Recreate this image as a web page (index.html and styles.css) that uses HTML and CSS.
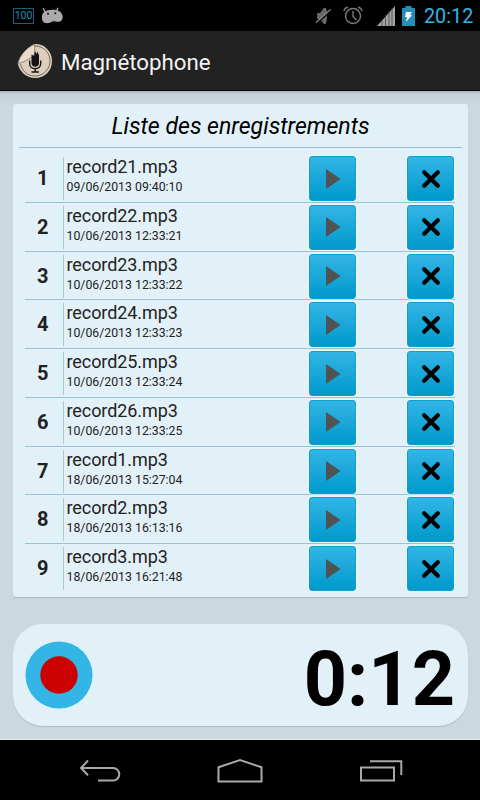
FILE: index.html
```
<!DOCTYPE html>
<html lang="fr">
<head>
<meta charset="utf-8">
<title>Magnétophone</title>
<link rel="stylesheet" href="styles.css">
</head>
<body>
<svg class="defs" aria-hidden="true">
  <symbol id="play" viewBox="0 0 20 22"><path d="M3 1 17.500 11 3 21Z" fill="#505254"/></symbol>
  <symbol id="cross" viewBox="0 0 20 20"><path d="M3.200 3.200 16.800 16.800M16.800 3.200 3.200 16.800" stroke="#000" stroke-width="4.200" stroke-linecap="round"/></symbol>
</svg>
<header class="status">
  <span class="level">100</span>
  <svg class="android" width="22" height="17" viewBox="0 0 22 17"><path d="M4 5 2.200 1M15.500 4 17 .8" stroke="#aaa" stroke-width="1.300"/><path d="M3 5C6 2.500 15 1.800 18 4c3.500 2 4.500 6 3 8.800-1.200 2.200-4.300 2.400-6.500 1.600-2-.6-3 .1-5 1-3 1.300-7 1.100-8-1.600C.5 11 .5 7.500 3 5Z" fill="#aaa"/><circle cx="7" cy="6.700" r="1" fill="#111"/><circle cx="14.300" cy="6.200" r="1" fill="#111"/></svg>
  <span class="grow"></span>
  <svg class="mute" width="17" height="18" viewBox="0 0 17 18"><path d="M2 6h3l4-5h1.500v16H9l-4-5H2Z" fill="#666"/><path d="M9 1.500c3-1 3 14 0 15" fill="none" stroke="#777" stroke-width="1.500"/><path d="m1.700 16.500 14.500-13" stroke="#000" stroke-width="1.500"/><path d="m1 15.500 14.500-13" stroke="#888" stroke-width="1.300"/></svg>
  <svg class="alarm" width="20" height="19" viewBox="0 0 20 19" fill="none" stroke="#7c7c7c" stroke-width="1.400"><circle cx="10" cy="10" r="7.500"/><path d="M10 5v5.500l3.500 3.500M1 5.200C1.200 3 2.700 1.600 5 1.200M15 1.200c2.300.4 3.800 1.800 4 4"/></svg>
  <svg class="signal" width="18" height="20" viewBox="0 0 18 20"><path d="M0 20 18 0v20Z" fill="#a3a3a3"/><path d="M5 13v7M8.500 9v11M12 5v15M15 2v18" stroke="#444" stroke-width=".8"/></svg>
  <svg class="battery" width="13" height="20" viewBox="0 0 13 20"><path d="M3.500 0h6v2H13v18H0V2h3.500Z" fill="#258fb8"/><path d="M4 6h6L8 9h2l-6 7 1-5H3Z" fill="#fff"/></svg>
  <span class="clock">20:12</span>
</header>
<div class="appbar">
  <svg class="logo" width="36" height="36" viewBox="0 0 36 36"><path d="M17.500 1C27 .5 35 8 35 18s-7.500 17-17 17C9 35 2.500 28.500.8 20.500Z" fill="#dccdbc"/><path d="M18 3C27 3 33 10 33 18s-6.500 15-15 15C10.500 33 5 28 3.500 21" fill="none" stroke="#5c5148" stroke-width=".8"/><path d="M17.500 1C18 6 17.800 10 16.500 13.500 11.500 16.500 6 19.500.8 20.500 2.500 13 9 5 17.500 1Z" fill="#eadccc" stroke="#6e6258" stroke-width=".7"/><path d="M14.500 11.500 17 13l1-5 1.500 3 1-2.500 1.500 4V20c0 5-7.500 5-7.500 0Z" fill="#151515"/><path d="M12.700 17.500v3c0 7 11 7 11 0v-3M18.200 25.500v3.500M14.500 29h7.500" fill="none" stroke="#151515" stroke-width="1.400"/></svg>
  <h1>Magnétophone</h1>
</div>
<main>
  <section class="panel">
    <h2>Liste des enregistrements</h2>
    <ol>
      <li><b>1</b><div class="info"><p>record21.mp3</p><time>09/06/2013 09:40:10</time></div><button aria-label="Lire"><svg class="play"><use href="#play"/></svg></button><button aria-label="Supprimer"><svg class="cross"><use href="#cross"/></svg></button></li>
      <li><b>2</b><div class="info"><p>record22.mp3</p><time>10/06/2013 12:33:21</time></div><button aria-label="Lire"><svg class="play"><use href="#play"/></svg></button><button aria-label="Supprimer"><svg class="cross"><use href="#cross"/></svg></button></li>
      <li><b>3</b><div class="info"><p>record23.mp3</p><time>10/06/2013 12:33:22</time></div><button aria-label="Lire"><svg class="play"><use href="#play"/></svg></button><button aria-label="Supprimer"><svg class="cross"><use href="#cross"/></svg></button></li>
      <li><b>4</b><div class="info"><p>record24.mp3</p><time>10/06/2013 12:33:23</time></div><button aria-label="Lire"><svg class="play"><use href="#play"/></svg></button><button aria-label="Supprimer"><svg class="cross"><use href="#cross"/></svg></button></li>
      <li><b>5</b><div class="info"><p>record25.mp3</p><time>10/06/2013 12:33:24</time></div><button aria-label="Lire"><svg class="play"><use href="#play"/></svg></button><button aria-label="Supprimer"><svg class="cross"><use href="#cross"/></svg></button></li>
      <li><b>6</b><div class="info"><p>record26.mp3</p><time>10/06/2013 12:33:25</time></div><button aria-label="Lire"><svg class="play"><use href="#play"/></svg></button><button aria-label="Supprimer"><svg class="cross"><use href="#cross"/></svg></button></li>
      <li><b>7</b><div class="info"><p>record1.mp3</p><time>18/06/2013 15:27:04</time></div><button aria-label="Lire"><svg class="play"><use href="#play"/></svg></button><button aria-label="Supprimer"><svg class="cross"><use href="#cross"/></svg></button></li>
      <li><b>8</b><div class="info"><p>record2.mp3</p><time>18/06/2013 16:13:16</time></div><button aria-label="Lire"><svg class="play"><use href="#play"/></svg></button><button aria-label="Supprimer"><svg class="cross"><use href="#cross"/></svg></button></li>
      <li><b>9</b><div class="info"><p>record3.mp3</p><time>18/06/2013 16:21:48</time></div><button aria-label="Lire"><svg class="play"><use href="#play"/></svg></button><button aria-label="Supprimer"><svg class="cross"><use href="#cross"/></svg></button></li>
    </ol>
  </section>
  <section class="recorder">
    <svg width="68" height="68" viewBox="0 0 68 68"><circle cx="34" cy="34" r="33.500" fill="#33b5e5"/><circle cx="34" cy="34" r="18.700" fill="#c00"/></svg>
    <span class="timer">0:12</span>
  </section>
</main>
<nav>
  <svg width="42" height="24" viewBox="0 0 42 24"><path d="M2 9h32a6.300 6.300 0 0 1 0 12.600H19M9 1.500 2 9l7 7.200"/></svg>
  <svg width="46" height="26" viewBox="0 0 46 26"><path d="M1.500 23.500V9.300L23 2l21.500 7.300v14.200Z"/></svg>
  <svg width="44" height="24" viewBox="0 0 44 24"><path d="M2 8.500h33v13H2ZM11 2.200h31.300V16"/></svg>
</nav>
</body>
</html>
```
FILE: styles.css
```
* { box-sizing: border-box; margin: 0; padding: 0; }
body {
  width: 480px; height: 800px; overflow: hidden;
  display: flex; flex-direction: column;
  background: #000; font-family: Roboto, sans-serif; color: #222;
}
svg { display: block; flex: none; }
.defs { position: absolute; width: 0; height: 0; }
.status { height: 31px; flex: none; display: flex; align-items: center; padding: 0 6px 0 13px; }
.level { width: 21px; height: 16px; border: 1px solid #17617b; color: #258fb0; font-size: 10.500px; line-height: 14px; text-align: center; }
.android { margin-left: 7px; }
.grow { flex: 1; }
.mute { margin-right: 11px; }
.alarm { margin-right: 14px; }
.signal { margin-right: 7px; }
.battery { margin-right: 9px; }
.clock { width: 50px; padding-top: 2px; font-size: 19.800px; line-height: 31px; color: #33b5e5; white-space: nowrap; }
.appbar { height: 60px; flex: none; display: flex; align-items: center; padding: 1px 0 0 17px; background: #222; border-bottom: 1px solid #080808; }
h1 { margin-left: 8px; padding-top: 1px; font-size: 22.300px; font-weight: 400; line-height: 30px; color: #f3f3f3; }
main { height: 649px; flex: none; padding: 13px 12px 0 13px; background: linear-gradient(#a9b5ba 0, #c5d3d9 3px, #cbd9de 14px); border-bottom: 1px solid #e1edf2; }
.panel { height: 493px; border-radius: 3px; background: #e2f1f8; box-shadow: 0 1px 1px #aab9c1; padding: 0 6px; }
h2 { height: 44px; border-bottom: 1px solid #92bfcc; font-size: 23.100px; font-weight: 400; font-style: italic; line-height: 46px; color: #000; text-align: center; white-space: nowrap; }
ol { list-style: none; padding: 6px 7px 0 6px; }
li { height: 48.750px; display: grid; grid-template-columns: 37.500px 246.500px 98px 47px; align-items: start; border-bottom: 1px solid #98c3d0; padding-top: 2px; }
li:last-child { border: 0; }
b { font-size: 20px; line-height: 45px; text-align: center; padding-right: 2px; }
.info { height: 43px; border-left: 1px solid #a3cbd9; padding-left: 3px; margin-top: 1px; }
.info p { font-size: 18px; line-height: 20px; letter-spacing: -.08px; }
time { display: block; font-size: 12.300px; line-height: 20px; white-space: nowrap; }
button { width: 47px; height: 45px; border: 1px solid #0c9fd2; border-radius: 3px; background: linear-gradient(#33b5e5, #0099cc); box-shadow: 0 0 0 1px #ffffff70; display: grid; place-items: center; }
.play { width: 20px; height: 22px; }
.cross { width: 20px; height: 20px; }
.recorder { height: 102px; margin-top: 27px; border-radius: 30px; background: #e2f1f8; box-shadow: 0 1px 1px #aab9c1; display: flex; align-items: center; justify-content: space-between; padding: 0 13px 0 12px; }
.timer { padding-top: 8px; font-size: 75.500px; font-weight: 700; line-height: 94px; color: #000; }
nav { height: 60px; display: flex; align-items: center; justify-content: space-between; padding: 2px 77px 0 79px; }
nav path { fill: none; stroke: #a9a9a9; stroke-width: 2; }
```
